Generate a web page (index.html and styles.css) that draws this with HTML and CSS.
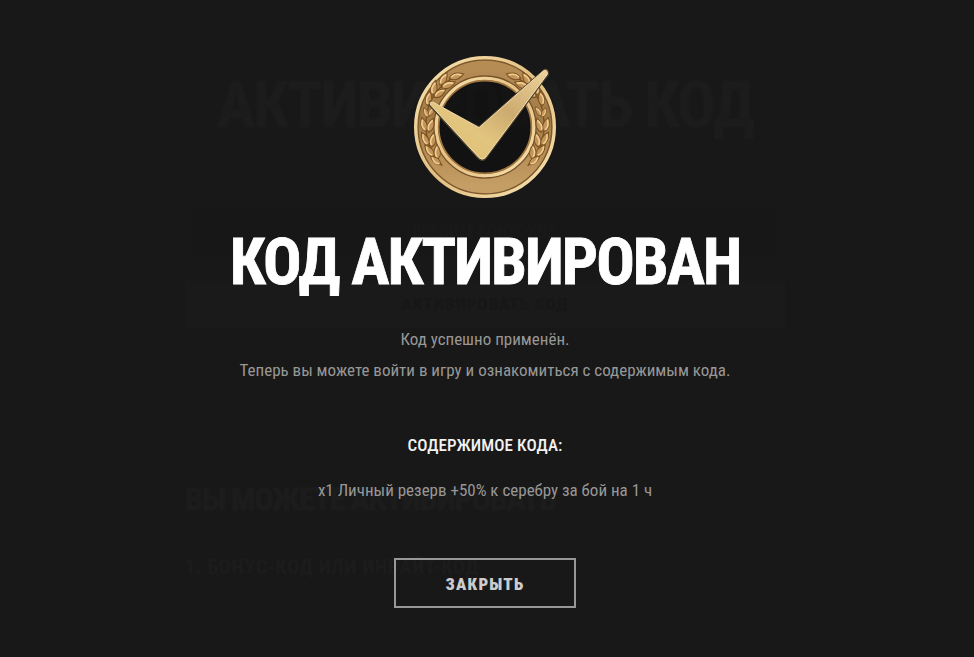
FILE: index.html
```html
<!DOCTYPE html>
<html lang="ru">
<head>
    <meta charset="UTF-8">
    <meta name="viewport" content="width=device-width, initial-scale=1.0">
    <title>Код активирован</title>
    <link rel="stylesheet" href="styles.css">
</head>
<body>
    <!-- Страница под окном -->
    <div class="page" aria-hidden="true">
        <h1 class="page-title">Активировать код</h1>
        <div class="page-input">Введите бонус-код</div>
        <div class="page-submit">Активировать код</div>
        <h2 class="page-subtitle">Вы можете активировать</h2>
        <h3 class="page-item">1. Бонус-код или инвайт-код</h3>
    </div>

    <!-- Окно с результатом -->
    <div class="modal">
        <svg class="medal" viewBox="39 30 432 432">
            <defs>
                <linearGradient id="ring" x1="0" y1="0" x2="0" y2="1">
                    <stop offset="0" stop-color="#b58c54"/>
                    <stop offset="0.4" stop-color="#a37b46"/>
                    <stop offset="0.7" stop-color="#b48b53"/>
                    <stop offset="1" stop-color="#c59e66"/>
                </linearGradient>
                <linearGradient id="rim" x1="0" y1="0" x2="1" y2="1">
                    <stop offset="0" stop-color="#f9e3b0"/>
                    <stop offset="0.5" stop-color="#e3bf81"/>
                    <stop offset="1" stop-color="#f8e3b2"/>
                </linearGradient>
                <linearGradient id="check" x1="0" y1="1" x2="1" y2="0">
                    <stop offset="0" stop-color="#dfbd74"/>
                    <stop offset="0.35" stop-color="#e2c57e"/>
                    <stop offset="0.6" stop-color="#cdab70"/>
                    <stop offset="1" stop-color="#ecd29c"/>
                </linearGradient>
                <g id="leaf">
                    <path class="leaf" d="M0 21 C-13 9 -11 -8 0 -24 C11 -8 13 9 0 21 Z"/>
                    <path class="shine" d="M-3 13 C-8 4 -6 -6 0 -15"/>
                </g>
                <g id="branch">
                    <path class="stem" d="M127 362 C84 318 72 262 80 212 C85 168 112 126 160 98"/>
                    <use href="#leaf" transform="translate(168 94) rotate(72)"/>
                    <use href="#leaf" transform="translate(130 103) rotate(28)"/>
                    <use href="#leaf" transform="translate(144 120) rotate(68)"/>
                    <use href="#leaf" transform="translate(102 130) rotate(10)"/>
                    <use href="#leaf" transform="translate(119 145) rotate(55)"/>
                    <use href="#leaf" transform="translate(86 162) rotate(8)"/>
                    <use href="#leaf" transform="translate(79 203) rotate(-28) scale(.7)"/>
                    <use href="#leaf" transform="translate(95 200) rotate(30) scale(.7)"/>
                    <use href="#leaf" transform="translate(72 240) rotate(-18)"/>
                    <use href="#leaf" transform="translate(92 242) rotate(18)"/>
                    <use href="#leaf" transform="translate(76 283) rotate(-28)"/>
                    <use href="#leaf" transform="translate(98 286) rotate(8)"/>
                    <use href="#leaf" transform="translate(89 318) rotate(-38)"/>
                    <use href="#leaf" transform="translate(112 322) rotate(-4)"/>
                    <use href="#leaf" transform="translate(108 347) rotate(-52) scale(.9)"/>
                </g>
            </defs>
            <circle cx="255" cy="246" r="140" fill="#0c0c0c" fill-opacity="0.5"/>
            <circle cx="255" cy="246" r="175" fill="none" stroke="url(#ring)" stroke-width="70"/>
            <circle cx="255" cy="246" r="201" fill="none" stroke="#7d5a2e" stroke-width="5"/>
            <circle cx="255" cy="246" r="208" fill="none" stroke="url(#rim)" stroke-width="10"/>
            <circle cx="255" cy="246" r="153" fill="none" stroke="#76532a" stroke-width="4"/>
            <circle cx="255" cy="246" r="146" fill="none" stroke="url(#rim)" stroke-width="10"/>
            <circle cx="255" cy="246" r="139" fill="none" stroke="#a0763f" stroke-width="5"/>
            <use href="#branch"/>
            <use href="#branch" transform="translate(510 0) scale(-1 1)"/>
            <path class="check-shadow" d="M92 172 L237 248 L433 76 Q444 72 443 88 L256 339 Q247 348 237 339 L90 180 Z"/>
            <path class="check" d="M92 172 Q96 169 102 173 L237 248 L431 77 Q443 72 442 88 L256 338 Q247 347 237 338 L92 180 Q89 175 92 172 Z"/>
        </svg>

        <h1 class="title">Код активирован</h1>
        <p class="text">Код успешно применён.<br>Теперь вы можете войти в игру и ознакомиться с содержимым кода.</p>
        <h2 class="content-title">Содержимое кода:</h2>
        <p class="content-item">x1 Личный резерв +50% к серебру за бой на 1 ч</p>
        <button type="button" class="close">Закрыть</button>
    </div>
</body>
</html>
```
FILE: styles.css
```css
* {
    box-sizing: border-box;
}
html {
    background: #181818;
}
body {
    position: relative;
    width: 970px;
    height: 657px;
    margin: 0;
    overflow: hidden;
    font-family: "Roboto Condensed", Roboto, sans-serif;
    font-stretch: 75%;
    color: #979797;
}
h1, h2, h3, p {
    margin: 0;
    white-space: nowrap;
}
.page {
    width: 600px;
    margin: 0 auto;
    padding-top: 68px;
    color: #1c1c1c;
    text-transform: uppercase;
}
.page-title {
    font-size: 64px;
    line-height: 76px;
    letter-spacing: -2px;
    text-align: center;
    -webkit-text-stroke: 1px #1c1c1c;
}
.page-input {
    height: 48px;
    margin: 64px 8px 0;
    font-size: 16px;
    line-height: 48px;
    text-align: center;
    color: #1a1a1a;
    background: #171717;
}
.page-submit {
    height: 47px;
    margin-top: 25px;
    font-size: 17px;
    font-weight: bold;
    line-height: 46px;
    letter-spacing: 1px;
    text-align: center;
    color: #171717;
    background: #1a1a1a;
}
.page-subtitle {
    margin-top: 151px;
    font-size: 32px;
    line-height: 40px;
    letter-spacing: -1.2px;
    -webkit-text-stroke: 1px #1c1c1c;
}
.page-item {
    margin-top: 36px;
    font-size: 20px;
    line-height: 24px;
    letter-spacing: 0.6px;
}
.modal {
    position: absolute;
    top: 0;
    left: 0;
    width: 100%;
    display: flex;
    flex-direction: column;
    align-items: center;
    padding-top: 55px;
    text-align: center;
}
.medal {
    width: 144px;
    height: 144px;
}
.stem {
    fill: none;
    stroke: #7a5122;
    stroke-width: 4;
}
.leaf {
    fill: #c4955a;
    stroke: #7a5122;
    stroke-width: 3;
}
.shine {
    fill: none;
    stroke: #f0cd90;
    stroke-width: 5;
    stroke-linecap: round;
}
.check-shadow {
    fill: none;
    stroke: #51452f;
    stroke-width: 8;
}
.check {
    fill: url(#check);
    stroke: #f5deb0;
    stroke-width: 3;
}
.title {
    margin-top: 26px;
    font-size: 64px;
    line-height: 76px;
    letter-spacing: -2px;
    text-transform: uppercase;
    color: #fff;
    -webkit-text-stroke: 0.8px #fff;
}
.text {
    margin-top: 23px;
    font-size: 17px;
    line-height: 31px;
}
.content-title {
    margin-top: 44px;
    font-size: 17px;
    font-weight: 500;
    line-height: 31px;
    letter-spacing: 0.1px;
    text-transform: uppercase;
    color: #f2f2f2;
}
.content-item {
    margin-top: 14px;
    font-size: 17px;
    line-height: 31px;
}
.close {
    width: 182px;
    height: 50px;
    margin-top: 52px;
    padding: 2px 0 0;
    font-family: inherit;
    font-stretch: inherit;
    font-size: 17px;
    font-weight: 900;
    letter-spacing: 1.2px;
    text-transform: uppercase;
    color: #ccc;
    background: none;
    border: 2px solid #979797;
    cursor: pointer;
}
.close:hover {
    color: #fff;
    border-color: #fff;
}
```
